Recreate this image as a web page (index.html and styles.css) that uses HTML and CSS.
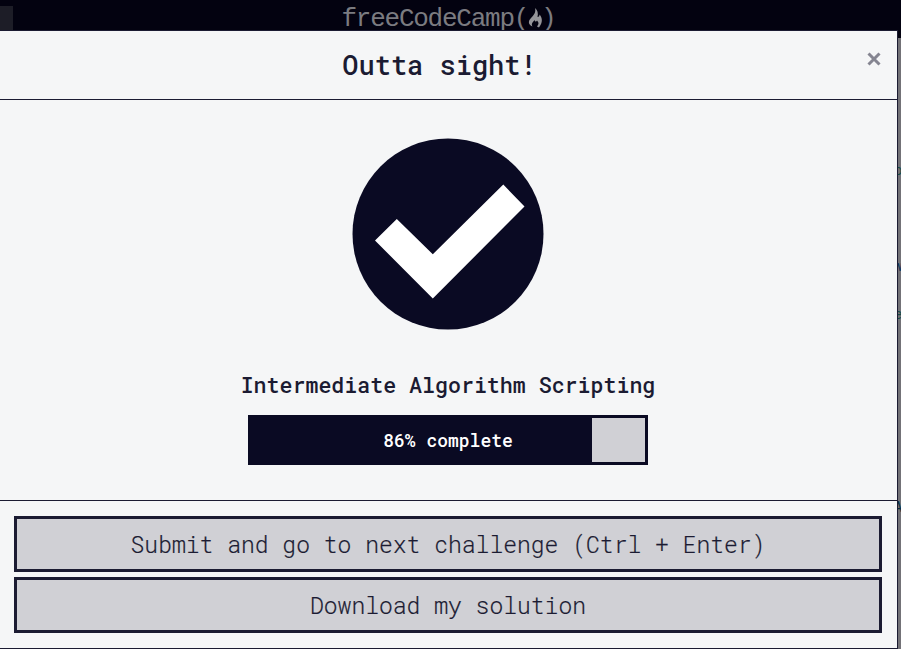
FILE: index.html
```
<!DOCTYPE html>
<html lang="en">
<head>
<meta charset="utf-8">
<title>Outta sight!</title>
<link rel="stylesheet" href="styles.css">
</head>
<body>
<header class="navbar">
  <div class="search"></div>
  <div class="logo">
    <span class="logo-name">freeCodeCamp(</span>
    <svg class="flame" width="15" height="20" viewBox="0 0 15 20"><path d="M7 0C9.5 2 10.5 5 9.500 9C11 9 11.500 8 11.500 6.500C14.500 10 15 14 11 19.500L9 18.500C11 16 11 14.500 9 12.500C8.500 14 7 14 6.500 12C4.500 14.500 3 16 4.500 18.500C0 16.500 0 13 3 10C6.500 6.500 8 4 7 0Z"/></svg>
    <span class="logo-name">)</span>
  </div>
</header>
<div class="editor">
  <span class="code code-a">o</span>
  <span class="code code-b">w</span>
  <span class="code code-c">e</span>
  <span class="code code-d">A</span>
</div>
<main class="modal">
  <div class="modal-header">
    <h1>Outta sight!</h1>
    <button class="close" aria-label="Close"><svg width="14" height="14" viewBox="0 0 14 14"><path d="M1.500 1.500L12.500 12.500M12.500 1.500L1.500 12.500"/></svg></button>
  </div>
  <div class="modal-body">
    <svg class="check" width="192" height="192" viewBox="0 0 192 192"><circle cx="96" cy="96" r="95.5"/><path d="M23 102.5L44.8 81L80.8 116.3L151.3 46.5L172.5 68.5L80.8 160.5Z"/></svg>
    <h2>Intermediate Algorithm Scripting</h2>
    <div class="progress">
      <div class="progress-fill" style="width:344px"></div>
      <span class="progress-label">86% complete</span>
    </div>
  </div>
  <div class="modal-footer">
    <button class="btn">Submit and go to next challenge (Ctrl + Enter)</button>
    <button class="btn">Download my solution</button>
  </div>
</main>
</body>
</html>
```
FILE: styles.css
```
* { box-sizing: border-box; }
body {
  margin: 0;
  width: 901px;
  height: 649px;
  overflow: hidden;
  position: relative;
  background: #737277;
  color: #1b1b32;
  font-family: "Roboto Mono", "DejaVu Sans Mono", monospace;
}
.navbar {
  position: relative;
  display: flex;
  justify-content: center;
  height: 38px;
  background: #030210;
}
.search {
  position: absolute;
  left: 0;
  top: 6px;
  width: 13px;
  height: 25px;
  background: #1d1d27;
}
.logo {
  display: flex;
  width: 217px;
  height: 38px;
  margin-right: 1px;
  color: #7b7b80;
}
.logo-name {
  font: 26px/38px "Liberation Mono", monospace;
  letter-spacing: -1.25px;
}
.flame { flex: none; margin: 8px -2px 0 0; fill: #96969a; }
.code {
  position: absolute;
  left: 894px;
  font-size: 14px;
  line-height: 18px;
  color: #174c48;
}
.code-a { top: 161px; }
.code-b { top: 257px; color: #0b3057; }
.code-c { top: 305px; }
.code-d { top: 498px; color: #062c3e; }
.modal {
  position: absolute;
  left: 0;
  top: 30px;
  width: 898px;
  height: 619px;
  display: flex;
  flex-direction: column;
  background: #f5f6f7;
  border: solid #1b1b32;
  border-width: 1px 1px 1px 0;
}
.modal-header {
  position: relative;
  height: 69px;
  border-bottom: 1px solid #1b1b32;
}
h1, h2 { margin: 0; font-weight: 500; text-align: center; }
h1 { font-size: 27px; line-height: 68px; padding-right: 18px; }
.close {
  position: absolute;
  right: 16px;
  top: 21px;
  width: 14px;
  height: 14px;
  padding: 0;
  border: 0;
  background: none;
}
.close svg { display: block; fill: none; stroke: #858591; stroke-width: 3; }
.modal-body {
  display: flex;
  flex-direction: column;
  align-items: center;
  height: 401px;
  padding: 38px 1px 0 0;
  border-bottom: 1px solid #1b1b32;
}
.check { display: block; fill: #0a0a23; }
.check path { fill: #fff; }
h2 { font-size: 21.6px; line-height: 30px; margin-top: 40px; }
.progress {
  position: relative;
  width: 400px;
  height: 50px;
  margin-top: 15px;
  background: #d0d0d5;
  border: 3px solid #0a0a23;
}
.progress-fill { margin-left: -3px; height: 100%; background: #0a0a23; }
.progress-label {
  position: absolute;
  inset: 0;
  text-align: center;
  font-size: 18px;
  font-weight: 500;
  line-height: 44px;
  color: #fff;
}
.modal-footer {
  display: flex;
  flex-direction: column;
  gap: 5px;
  padding: 15px 15px 15px 14px;
}
.btn {
  height: 56px;
  padding: 0;
  border: 3px solid #1b1b32;
  background: #d0d0d5;
  color: #1b1b32;
  font-family: inherit;
  font-size: 23px;
  font-weight: 300;
  line-height: 50px;
  -webkit-text-stroke: 0.2px currentColor;
}
```
